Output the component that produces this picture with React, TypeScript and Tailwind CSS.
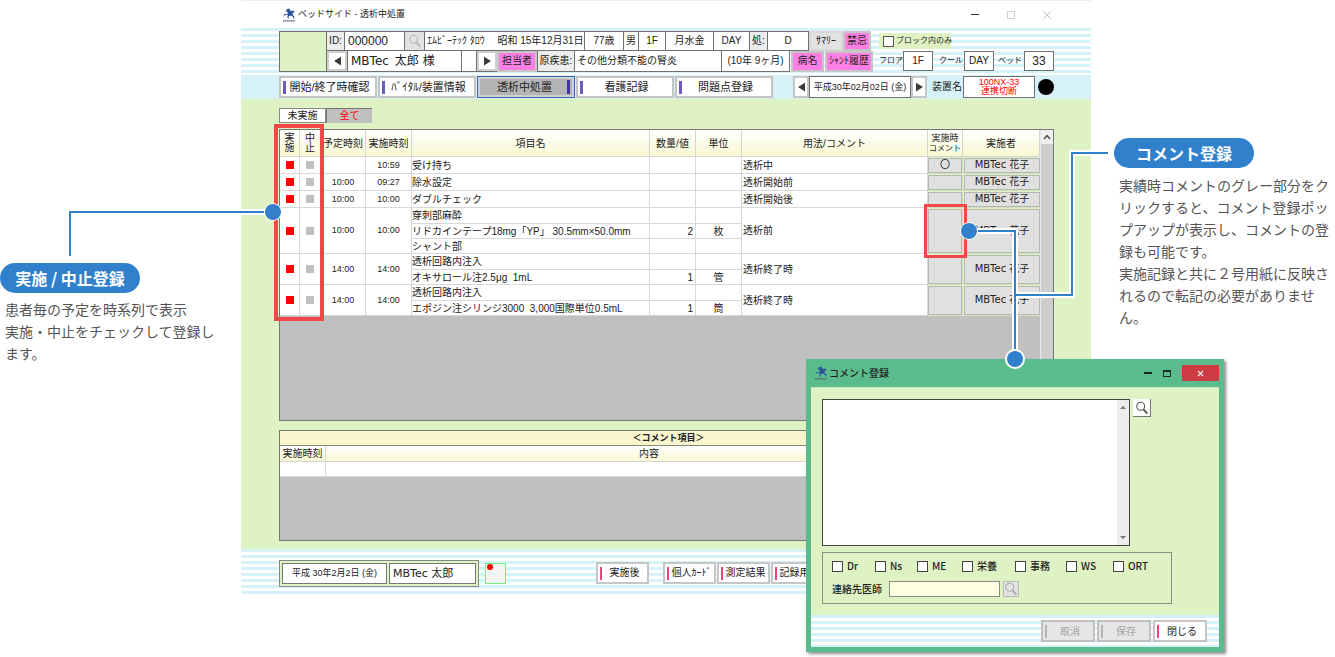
import React from "react";

const UI = "font-['Liberation_Sans','Noto_Sans_CJK_JP',sans-serif]";
const JP = "font-['Noto_Sans_CJK_JP',sans-serif]";

const STRIPES =
  "bg-[repeating-linear-gradient(to_bottom,#d6f2f8_0px,#d6f2f8_3px,#ffffff_3px,#ffffff_6px)]";

function Mascot() {
  return (
    <svg viewBox="0 0 14 14" className="size-3.5 shrink-0" aria-hidden="true">
      <path
        d="M4.500 1.500 6.500.5l1.300.6.2 1.400 1.600.5 1.400-.4 1.500 1-.3 1-1.400.1-.2 1.500.6 1.300 1.300 1-.5 2-.8-.1.1-1.500-2-1.200-1.900.1-.9 1.200.3 1.600-.9.1-.6-2.100.7-1.500-1.600-.4-1.900.7L1 7.200l1.800-1.100 2.400.2.6-1.900-.5-1-1.500.2z"
        fill="#2f519c"
      />
      <path d="M1 12.800h12" stroke="#5a5f70" strokeWidth="1.200" strokeDasharray="1.600 .4" />
    </svg>
  );
}

function Loupe({ color }: { color: string }) {
  return (
    <svg viewBox="0 0 16 16" className="size-3.5" aria-hidden="true">
      <circle cx="6.500" cy="6" r="4.500" fill="none" stroke={color} strokeWidth="1.200" />
      <path d="M9.800 9.600 14 14.500" stroke={color} strokeWidth="2.200" />
    </svg>
  );
}

function Arrow({ dir }: { dir: "left" | "right" }) {
  return (
    <svg viewBox="0 0 8 10" className="h-2.5 w-[7px]" aria-hidden="true">
      <path d={dir === "left" ? "M8 0 0 5l8 5z" : "M0 0l8 5-8 5z"} fill="#3a3a3a" />
    </svg>
  );
}

function Cell({ className, children }: { className: string; children?: React.ReactNode }) {
  return (
    <div
      className={`flex shrink-0 items-center overflow-hidden whitespace-nowrap border-r border-[#707070] ${className}`}
    >
      {children}
    </div>
  );
}

function ArrowButton({ dir, label }: { dir: "left" | "right"; label: string }) {
  return (
    <button
      aria-label={label}
      className="flex w-5 shrink-0 items-center justify-center self-stretch border-2 border-[#d0d0d0] bg-white"
    >
      <Arrow dir={dir} />
    </button>
  );
}

function PinkButton({ className, children }: { className: string; children: string }) {
  return (
    <button
      className={`shrink-0 self-stretch whitespace-nowrap border-2 border-[#c6c6c6] bg-[#ff80e4] text-center ${className}`}
    >
      {children}
    </button>
  );
}

function PatientHeader() {
  return (
    <div className="flex h-[47px] pt-[3px] pl-[38px] pr-[37px] text-[10px] leading-none text-[#222]">
      <div className="flex h-[41px] shrink-0">
        <div className="w-12 border border-[#707070] bg-[#dff2c4]" />
        <div className="flex flex-col">
          <div className="flex h-5">
            <div className="flex border-y border-[#707070] bg-white">
              <Cell className="w-[18px] justify-center bg-[#ececec]">ID:</Cell>
              <Cell className="w-[60px] pl-[3px] text-[12px]">000000</Cell>
              <button
                aria-label="患者検索"
                className="flex w-5 items-center justify-center border-r border-[#707070] bg-[#e2e2e2]"
              >
                <Loupe color="#b8b8b8" />
              </button>
              <Cell className="w-[72px] border-r-0 pl-0.5">ｴﾑﾋﾞｰﾃｯｸ ﾀﾛｳ</Cell>
              <Cell className="w-[88px] justify-center">昭和 15年12月31日</Cell>
              <Cell className="w-[39px] justify-center">77歳</Cell>
              <Cell className="w-[15px] justify-center">男</Cell>
              <Cell className="w-[27px] justify-center">1F</Cell>
              <Cell className="w-12 justify-center">月水金</Cell>
              <Cell className="w-9 justify-center">DAY</Cell>
              <Cell className="w-[18px] justify-center bg-[#ececec]">処:</Cell>
              <Cell className="w-[41px] justify-center">D</Cell>
            </div>
            <button className="w-[34px] border-2 border-[#d8d8d8] bg-[#e2e2e2]">ｻﾏﾘｰ</button>
            <PinkButton className="w-[28px]">禁忌</PinkButton>
          </div>
          <div className="flex h-[22px]">
            <div className="flex border-b border-[#707070] bg-white">
              <ArrowButton dir="left" label="前の患者" />
              <Cell className="w-[115px] border-l pl-[3px] font-['DejaVu_Sans','Noto_Sans_CJK_JP',sans-serif] text-[12px]">
                MBTec&ensp;太郎 様
              </Cell>
              <Cell className="w-[15px]" />
              <ArrowButton dir="right" label="次の患者" />
            </div>
            <PinkButton className="w-10">担当者</PinkButton>
            <div className="flex border-b border-[#707070] bg-white">
              <Cell className="w-[38px] justify-center border-l bg-[#ececec]">原疾患:</Cell>
              <Cell className="w-[147px] pl-0.5">その他分類不能の腎炎</Cell>
              <Cell className="w-[68px] justify-center">(10年 9ヶ月)</Cell>
            </div>
            <PinkButton className="ml-px w-[33px]">病名</PinkButton>
            <PinkButton className="ml-px w-12">ｼｬﾝﾄ履歴</PinkButton>
          </div>
        </div>
      </div>
      <div className="ml-auto flex w-[175px] shrink-0 flex-col">
        <label className="mt-0.5 flex h-4 w-[72px] shrink-0 items-center gap-0.5 whitespace-nowrap bg-[#dff2c4] pl-1 text-[8px]">
          <input
            type="checkbox"
            className="size-[11px] shrink-0 appearance-none border border-[#555] bg-white"
          />
          ブロック内のみ
        </label>
        <div className="mt-px flex h-[21px] items-center whitespace-nowrap text-[8px]">
          <span className="w-6">フロア</span>
          <span className="flex h-5 w-[30px] items-center justify-center border border-[#707070] bg-white text-[10px]">
            1F
          </span>
          <span className="w-[31px] pl-1.5">クール</span>
          <span className="flex h-5 w-[30px] items-center justify-center border border-[#707070] bg-white text-[10px]">
            DAY
          </span>
          <span className="w-[30px] pl-1">ベッド</span>
          <span className="flex h-5 w-[30px] items-center justify-center border border-[#707070] bg-white text-[12px]">
            33
          </span>
        </div>
      </div>
    </div>
  );
}

const TABS = ["開始/終了時確認", "ﾊﾞｲﾀﾙ/装置情報", "透析中処置", "看護記録", "問題点登録"];

function TabBar() {
  return (
    <div className="flex h-6 items-center bg-[#d6f2f8] pl-[38px] pr-[37px] text-[10px] text-[#222]">
      <nav className="flex gap-px">
        {TABS.map((t, i) => {
          const active = i === 2;
          return (
            <button
              key={t}
              className={
                active
                  ? "flex h-[22px] w-[98px] items-center border border-[#3a68b0] bg-[#b4b4b4] px-1 text-[11px] leading-none whitespace-nowrap outline-2 -outline-offset-3 outline-[#d0d0d0]"
                  : "flex h-[22px] w-[98px] items-center border-2 border-[#c4c4c4] bg-white px-0.5 text-[11px] leading-none whitespace-nowrap"
              }
            >
              {!active && <span className="h-[13px] w-[3px] shrink-0 bg-[#6c5cc0]" />}
              <span className="flex-1 text-center">{t}</span>
              {active && <span className="h-[14px] w-[3px] shrink-0 bg-[#4030c0]" />}
            </button>
          );
        })}
      </nav>
      <div className="ml-auto flex h-[22px] items-center whitespace-nowrap leading-none">
        <button
          aria-label="前の日"
          className="flex h-[22px] w-4 items-center justify-center border-2 border-[#c6c6c6] bg-white"
        >
          <Arrow dir="left" />
        </button>
        <span className="flex h-[22px] w-[102px] items-center justify-center border border-[#707070] bg-white text-[9px]">
          平成30年02月02日 (金)
        </span>
        <button
          aria-label="次の日"
          className="flex h-[22px] w-4 items-center justify-center border-2 border-[#c6c6c6] bg-white"
        >
          <Arrow dir="right" />
        </button>
        <span className="w-9 pl-[5px]">装置名</span>
        <span className="flex h-[22px] w-[72px] flex-col items-center justify-center border border-[#707070] bg-white text-[9px] leading-[9px] text-[#f00]">
          <span>100NX-33</span>
          <span>連携切断</span>
        </span>
        <span className="ml-[3px] size-4 rounded-full bg-black" />
      </div>
    </div>
  );
}

type Line = { item: string; qty?: string; unit?: string };
type Entry = { plan: string; done: string; lines: Line[]; usage: string; mark?: string };

const ENTRIES: Entry[] = [
  { plan: "", done: "10:59", lines: [{ item: "受け持ち" }], usage: "透析中", mark: "〇" },
  { plan: "10:00", done: "09:27", lines: [{ item: "除水設定" }], usage: "透析開始前" },
  { plan: "10:00", done: "10:00", lines: [{ item: "ダブルチェック" }], usage: "透析開始後" },
  {
    plan: "10:00",
    done: "10:00",
    lines: [
      { item: "穿刺部麻酔" },
      { item: "リドカインテープ18mg「YP」 30.5mm×50.0mm", qty: "2", unit: "枚" },
      { item: "シャント部" },
    ],
    usage: "透析前",
  },
  {
    plan: "14:00",
    done: "14:00",
    lines: [{ item: "透析回路内注入" }, { item: "オキサロール注2.5μg  1mL", qty: "1", unit: "管" }],
    usage: "透析終了時",
  },
  {
    plan: "14:00",
    done: "14:00",
    lines: [
      { item: "透析回路内注入" },
      { item: "エポジン注シリンジ3000  3,000国際単位0.5mL", qty: "1", unit: "筒" },
    ],
    usage: "透析終了時",
  },
];

const TH = "border-b border-r border-[#d4d4d4] p-0 font-normal";
const TD = "border-b border-r border-[#d8d8d8] p-0 bg-white";
const ROW_H: Record<number, string> = { 1: "h-[17px]", 2: "h-[15px]", 3: "h-[15px]" };
const BTN_H: Record<number, string> = { 1: "h-[15px]", 2: "h-[29px]", 3: "h-[44px]" };

function ScheduleTable() {
  return (
    <div className="flex min-h-[292px] border border-[#777] bg-[#c0c0c0]">
      <div className="min-w-0 flex-1">
        <table className="w-full table-fixed border-separate border-spacing-0 text-[10px] leading-[13px] text-[#222]">
          <colgroup>
            <col className="w-5" />
            <col className="w-[21px]" />
            <col className="w-[45px]" />
            <col className="w-[46px]" />
            <col />
            <col className="w-[46px]" />
            <col className="w-[46px]" />
            <col className="w-[186px]" />
            <col className="w-[35px]" />
            <col className="w-[77px]" />
          </colgroup>
          <thead>
            <tr className="h-[27px] bg-[linear-gradient(to_bottom,#ffffff,#f8f8d0)]">
              <th className={`${TH} leading-[10px]`}>
                実
                <br />施
              </th>
              <th className={`${TH} leading-[10px]`}>
                中
                <br />止
              </th>
              <th className={TH}>予定時刻</th>
              <th className={TH}>実施時刻</th>
              <th className={TH}>項目名</th>
              <th className={TH}>数量/値</th>
              <th className={TH}>単位</th>
              <th className={TH}>用法/コメント</th>
              <th className={`${TH} whitespace-nowrap text-[9px] leading-[10px]`}>
                実施時
                <br />
                <span className="text-[8px]">コメント</span>
              </th>
              <th className={TH}>実施者</th>
            </tr>
          </thead>
          <tbody>
            {ENTRIES.map((e, i) => {
              const n = e.lines.length;
              return e.lines.map((l, j) => (
                <tr key={`${i}-${j}`} className={j === 0 && n > 1 ? "h-4" : ROW_H[n]}>
                  {j === 0 && (
                    <>
                      <td rowSpan={n} className={TD}>
                        <input
                          type="checkbox"
                          defaultChecked
                          aria-label={`${l.item} 実施`}
                          className="mx-auto block size-2 appearance-none bg-[#c0c0c0] checked:bg-[#f00]"
                        />
                      </td>
                      <td rowSpan={n} className={TD}>
                        <input
                          type="checkbox"
                          aria-label={`${l.item} 中止`}
                          className="mx-auto block size-2 appearance-none bg-[#c0c0c0] checked:bg-[#f00]"
                        />
                      </td>
                      <td rowSpan={n} className={`${TD} text-center text-[9px]`}>
                        {e.plan}
                      </td>
                      <td rowSpan={n} className={`${TD} text-center text-[9px]`}>
                        {e.done}
                      </td>
                    </>
                  )}
                  <td className={`${TD} whitespace-pre`}>{l.item}</td>
                  <td className={`${TD} pr-0.5 text-right`}>{l.qty}</td>
                  <td className={`${TD} text-center`}>{l.unit}</td>
                  {j === 0 && (
                    <>
                      <td rowSpan={n} className={`${TD} pl-px`}>
                        {e.usage}
                      </td>
                      <td rowSpan={n} className="border-b border-r border-[#d3dfc2] bg-[#dff2c4] p-0">
                        <button
                          aria-label={`${l.item} コメント登録`}
                          className={`flex w-full items-center justify-center border border-[#b4b8ae] bg-[#e0e0e0] leading-none ${BTN_H[n]}`}
                        >
                          {e.mark}
                        </button>
                      </td>
                      <td rowSpan={n} className="border-b border-[#d3dfc2] bg-[#dff2c4] p-0 pl-px">
                        <button
                          className={`flex w-full items-center justify-center whitespace-nowrap border border-[#b4b8ae] bg-[#e0e0e0] font-['DejaVu_Sans','Noto_Sans_CJK_JP',sans-serif] leading-none ${BTN_H[n]}`}
                        >
                          MBTec 花子
                        </button>
                      </td>
                    </>
                  )}
                </tr>
              ));
            })}
          </tbody>
        </table>
      </div>
      <div className="flex w-[13px] shrink-0 flex-col border-l border-[#e8e8e8] bg-[#cdcdcd]">
        <div className="flex h-[14px] items-center justify-center bg-[#f0f0f0]">
          <svg viewBox="0 0 8 6" className="h-1.5 w-2" aria-hidden="true">
            <path d="M1 5l3-3.500L7 5" fill="none" stroke="#444" strokeWidth="1.300" />
          </svg>
        </div>
      </div>
    </div>
  );
}

function CommentTable() {
  return (
    <div className="mt-[9px] min-h-[111px] border border-[#777] bg-[#c0c0c0]">
      <table className="w-full table-fixed border-separate border-spacing-0 text-[10px] leading-[13px] text-[#222]">
        <caption className="h-[15px] border-b border-[#8a8a7a] bg-[#f8f6cc] pl-1 text-[9px] font-bold leading-[14px]">
          ＜コメント項目＞
        </caption>
        <colgroup>
          <col className="w-[46px]" />
          <col />
        </colgroup>
        <thead>
          <tr className="h-4 bg-[linear-gradient(to_bottom,#ffffff,#f8f8d0)]">
            <th className={`${TH} whitespace-nowrap`}>実施時刻</th>
            <th className={`${TH} pr-20`}>内容</th>
          </tr>
        </thead>
        <tbody>
          <tr className="h-[15px]">
            <td className={TD} />
            <td className={TD} />
          </tr>
        </tbody>
      </table>
    </div>
  );
}

function ActionButton({ className, children }: { className: string; children: string }) {
  return (
    <button
      className={`flex h-[22px] shrink-0 items-center overflow-hidden whitespace-nowrap border-2 border-[#c6c6c6] bg-white pl-0.5 text-[10px] leading-none text-[#222] ${className}`}
    >
      <span className="h-[13px] w-0.5 shrink-0 bg-[#f0407c]" />
      <span className="flex-1 text-center">{children}</span>
    </button>
  );
}

function DisabledButton({ children }: { children: string }) {
  return (
    <button
      disabled
      className="flex h-[22px] w-[54px] items-center border-2 border-[#c0c0c0] bg-[#e6e6e6] pl-0.5 text-[10px] leading-none text-[#a4a4a4]"
    >
      <span className="h-[13px] w-0.5 bg-[#b4b4b4]" />
      <span className="flex-1">{children}</span>
    </button>
  );
}

function WindowFooter() {
  return (
    <footer className={`flex h-12 items-start pt-[11px] pl-[38px] text-[#222] ${STRIPES}`}>
      <div className="flex h-[27px] w-[200px] gap-0.5 border border-[#888] bg-[#dff2c4] p-0.5 leading-none">
        <span className="flex w-[105px] items-center justify-center whitespace-nowrap border border-[#777] bg-white text-[9px]">
          平成 30年2月2日 (金)
        </span>
        <span className="flex flex-1 items-center whitespace-nowrap border border-[#777] bg-white pl-[3px] font-['DejaVu_Sans','Noto_Sans_CJK_JP',sans-serif] text-[11px]">
          MBTec 太郎
        </span>
      </div>
      <span className="mt-[3px] ml-1.5 size-[21px] border border-[#70f080] bg-[#f4f4f4]">
        <span className="ml-px block size-[6px] rounded-full bg-[#f00]" />
      </span>
      <div className="mt-0.5 ml-[90px] flex gap-px">
        <ActionButton className="mr-[13px] w-[53px]">実施後</ActionButton>
        <ActionButton className="w-[53px]">個人ｶｰﾄﾞ</ActionButton>
        <ActionButton className="w-[53px]">測定結果</ActionButton>
        <ActionButton className="w-[53px]">記録用紙</ActionButton>
      </div>
    </footer>
  );
}

const RECIPIENTS = [
  { label: "Dr", w: "w-[43px]" },
  { label: "Ns", w: "w-[42px]" },
  { label: "ME", w: "w-[45px]" },
  { label: "栄養", w: "w-[53px]" },
  { label: "事務", w: "w-[51px]" },
  { label: "WS", w: "w-[47px]" },
  { label: "ORT", w: "w-10" },
];

function CommentDialog() {
  return (
    <section
      role="dialog"
      aria-label="コメント登録"
      className={`absolute top-[359px] right-[-133px] w-[418px] border-[5px] border-t-0 border-[#5abc8c] bg-[#5abc8c] text-[#222] shadow-[2px_2px_3px_rgba(0,0,0,0.45)] ${JP}`}
    >
      <header className="flex h-7 items-center pl-[3px]">
        <Mascot />
        <h2 className="pl-px text-[10px] font-medium leading-none">コメント登録</h2>
        <button aria-label="最小化" className="ml-auto flex h-4 w-5 items-center justify-center">
          <span className="h-0.5 w-2 bg-[#1d2b24]" />
        </button>
        <button aria-label="最大化" className="flex h-4 w-[18px] items-center justify-center">
          <span className="h-[7px] w-2 border border-t-2 border-[#1d2b24]" />
        </button>
        <button
          aria-label="閉じる"
          className="ml-1.5 flex h-4 w-[37px] items-center justify-center bg-[#cc3c42]"
        >
          <svg viewBox="0 0 8 8" className="size-[7px]" aria-hidden="true">
            <path d="M1 1l6 6M7 1 1 7" stroke="#fff" strokeWidth="1.300" />
          </svg>
        </button>
      </header>
      <div className="h-[228px] border-t border-[#c8ecc0] bg-[#dff2c4] pt-[11px] pl-[11px]">
        <div className="flex gap-[3px]">
          <div className="flex h-[147px] w-[308px] border border-[#444] bg-white">
            <textarea aria-label="コメント" className="min-w-0 flex-1 resize-none outline-none" />
            <div className="flex w-3 flex-col items-center justify-between bg-[#ececec] py-1.5">
              <svg viewBox="0 0 6 3" className="h-[3px] w-1.5" aria-hidden="true">
                <path d="M0 3l3-3 3 3z" fill="#777" />
              </svg>
              <svg viewBox="0 0 6 3" className="h-[3px] w-1.5" aria-hidden="true">
                <path d="M0 0l3 3 3-3z" fill="#777" />
              </svg>
            </div>
          </div>
          <button
            aria-label="定型文検索"
            className="flex size-[18px] items-center justify-center border-r border-b border-[#777] bg-white"
          >
            <Loupe color="#555" />
          </button>
        </div>
        <fieldset className="mt-1.5 h-[52px] w-[350px] border border-[#888f7c] pt-[7px] pl-[9px]">
          <div className="flex">
            {RECIPIENTS.map((r) => (
              <label
                key={r.label}
                className={`flex h-3 items-center gap-1 whitespace-nowrap text-[10px] font-medium leading-none ${r.w}`}
              >
                <input
                  type="checkbox"
                  className="size-[11px] shrink-0 appearance-none border border-[#444] bg-white"
                />
                {r.label}
              </label>
            ))}
          </div>
          <div className="mt-[9px] flex h-4 items-center">
            <label htmlFor="doctor" className="w-[57px] text-[10px] font-medium leading-none">
              連絡先医師
            </label>
            <input
              id="doctor"
              className="h-4 w-[111px] border border-[#8a8a8a] bg-[#fefee0] px-1 text-[10px]"
            />
            <button
              aria-label="医師検索"
              className="ml-[3px] flex size-4 items-center justify-center border border-[#bbb] bg-[#e2e2e2]"
            >
              <Loupe color="#aaa" />
            </button>
          </div>
        </fieldset>
      </div>
      <footer className={`flex h-8 items-start justify-end gap-0.5 pt-[5px] pr-3 ${STRIPES}`}>
        <DisabledButton>取消</DisabledButton>
        <DisabledButton>保存</DisabledButton>
        <ActionButton className="w-[54px]">閉じる</ActionButton>
      </footer>
    </section>
  );
}

function LeftPointer() {
  return (
    <>
      <div className="absolute top-[124px] left-[33px] h-[197px] w-[50px] border-4 border-[#f04848]" />
      <svg
        viewBox="0 0 220 60"
        className="pointer-events-none absolute top-[200px] left-[-176px] h-[60px] w-[220px]"
        aria-hidden="true"
      >
        <path d="M5 56V12H208" fill="none" stroke="#fff" strokeWidth="6" />
        <path d="M5 56V12H208" fill="none" stroke="#3080cc" strokeWidth="2" />
        <circle cx="208" cy="12" r="9" fill="#fff" />
        <circle cx="208" cy="12" r="8" fill="#3080cc" />
      </svg>
    </>
  );
}

function RightPointer() {
  return (
    <>
      <div className="absolute top-[204px] right-[124px] h-[54px] w-[43px] border-[3px] border-[#f04848]" />
      <svg
        viewBox="0 0 160 232"
        className="pointer-events-none absolute top-[140px] right-[-27px] h-[232px] w-[160px]"
        aria-hidden="true"
      >
        <path d="M11 91H57V219M57 155H114V13H150" fill="none" stroke="#fff" strokeWidth="6" />
        <path d="M11 91H57V219M57 155H114V13H150" fill="none" stroke="#3080cc" strokeWidth="2" />
        <circle cx="11" cy="91" r="9" fill="#fff" />
        <circle cx="11" cy="91" r="8" fill="#3080cc" />
        <circle cx="57" cy="219" r="10" fill="#fff" />
        <circle cx="57" cy="219" r="8" fill="#3080cc" />
      </svg>
    </>
  );
}

function Pill({ children }: { children: string }) {
  return (
    <h2 className="flex h-[30px] w-[140px] items-center justify-center whitespace-nowrap rounded-full bg-[#3080cc] text-[16px] font-bold leading-none text-white">
      {children}
    </h2>
  );
}

export default function App() {
  return (
    <main className={`grid grid-cols-[241px_minmax(850px,1fr)_244px] overflow-hidden bg-white pb-[60px] ${JP}`}>
      <aside className="pt-[263px]">
        <Pill>実施 / 中止登録</Pill>
        <p className="w-[220px] pt-[5px] pl-[5px] text-[14px] leading-[22px] text-[#555]">
          患者毎の予定を時系列で表示
          <br />
          実施・中止をチェックして登録します。
        </p>
      </aside>

      <div className={`relative ${UI}`}>
        <header className="flex h-7 items-center border-t border-[#ececec] bg-white pr-[38px] pl-[41px] text-[#222]">
          <Mascot />
          <h1 className="pl-0.5 text-[9px] leading-none">ベッドサイド - 透析中処置</h1>
          <div className="ml-auto flex gap-6">
            <button aria-label="最小化" className="flex size-3 items-center justify-center">
              <span className="h-px w-2 bg-[#333]" />
            </button>
            <button aria-label="最大化" className="flex size-3 items-center justify-center">
              <span className="size-2 border border-[#d0d0d0]" />
            </button>
            <button aria-label="閉じる" className="flex size-3 items-center justify-center">
              <svg viewBox="0 0 10 10" className="size-2.5" aria-hidden="true">
                <path d="M1 1l8 8M9 1 1 9" stroke="#c8c8c8" />
              </svg>
            </button>
          </div>
        </header>
        <div className={STRIPES}>
          <PatientHeader />
        </div>
        <TabBar />
        <div className="bg-[#dff2c4] pt-[9px] pr-[37px] pb-2 pl-[38px]">
          <div className="mb-1.5 flex h-[15px] text-[10px] leading-none">
            <button className="w-[47px] border border-[#888] bg-white text-[#222]">未実施</button>
            <button className="w-[46px] border-t border-l border-[#777] bg-[#c0c0c0] text-[#f00]">
              全て
            </button>
          </div>
          <ScheduleTable />
          <CommentTable />
        </div>
        <WindowFooter />
        <CommentDialog />
        <LeftPointer />
        <RightPointer />
      </div>

      <aside className="pt-[138px] pl-[23px]">
        <Pill>コメント登録</Pill>
        <p className="pt-[6px] pl-[5px] text-[14px] leading-[22px] text-[#555]">
          実績時コメントのグレー部分をクリックすると、コメント登録ポップアップが表示し、コメントの登録も可能です。
          <br />
          実施記録と共に２号用紙に反映されるので転記の必要がありません。
        </p>
      </aside>
    </main>
  );
}
